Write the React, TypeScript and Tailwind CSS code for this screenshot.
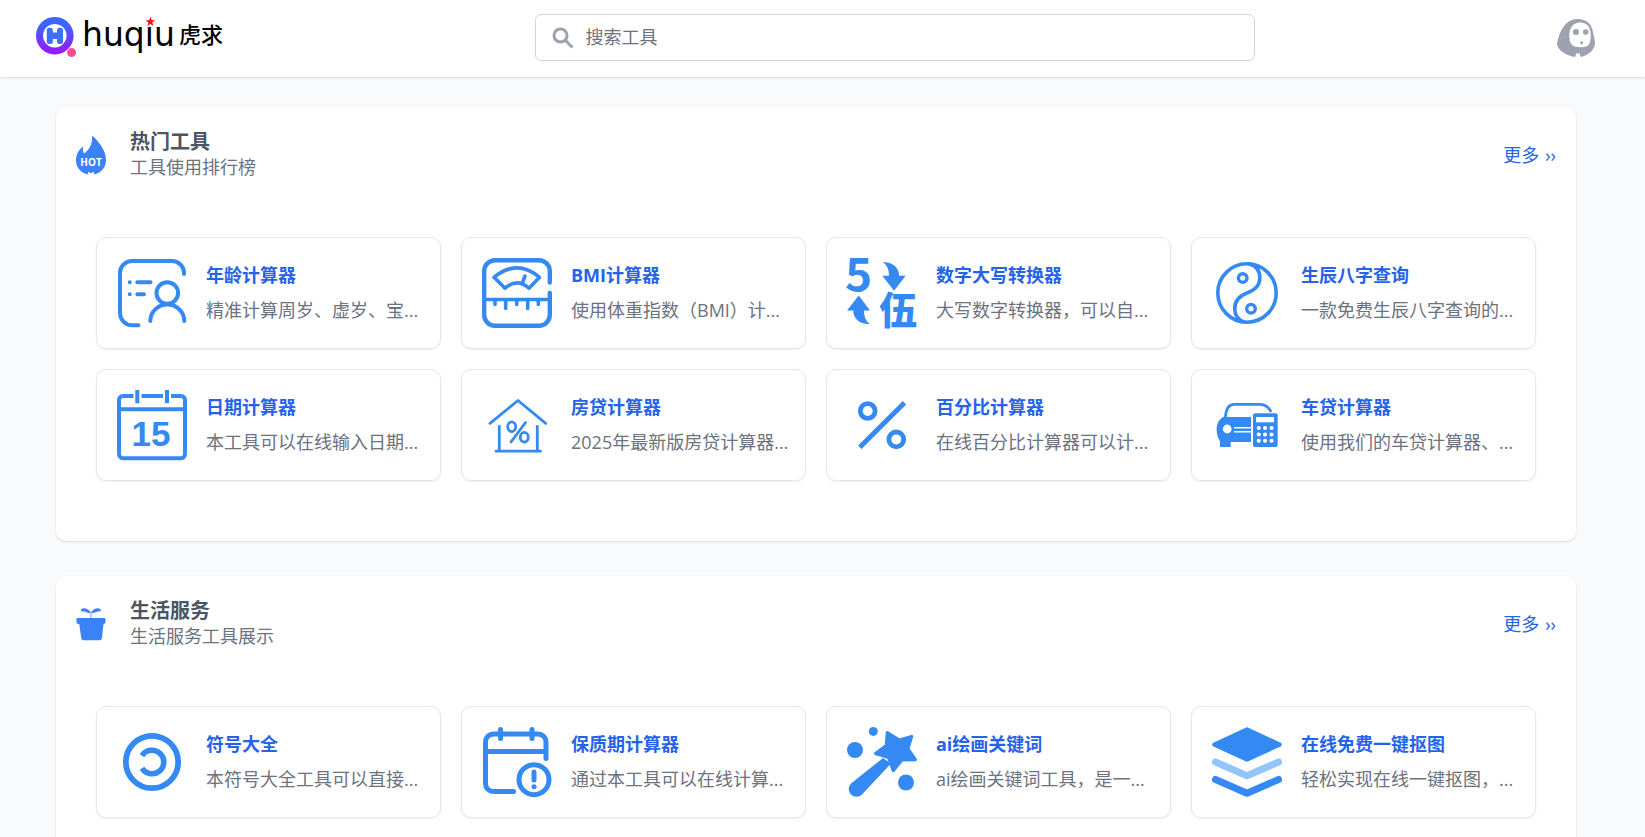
import { useState, type ReactNode } from "react";

type Tool = { name: string; desc: string; icon: ReactNode };

const BLUE = "#3589f2";

const Icon = ({ children }: { children: ReactNode }) => (
  <svg
    viewBox="0 0 70 70"
    className="h-[70px] w-[70px] shrink-0 overflow-visible"
    fill="none"
    stroke={BLUE}
    strokeWidth="4"
    strokeLinecap="round"
    strokeLinejoin="round"
    aria-hidden="true"
  >
    {children}
  </svg>
);

const AgeIcon = () => (
  <Icon>
    <path d="M67 16V15A12 12 0 0 0 55 3H15A12 12 0 0 0 3 15V55A12.300 12.300 0 0 0 15 67.300H21.500" />
    <path d="M12.700 24.300h.1M20.300 24.300H33.500M12.700 36.300h.1M20.300 36.300H27" />
    <circle cx="50.300" cy="35" r="10.800" />
    <path d="M33.300 63A17 16.500 0 0 1 67.300 63" />
  </Icon>
);

const BmiIcon = () => (
  <Icon>
    <path d="M67.800 24.500V13A10.800 10.800 0 0 0 57 2.200H13A10.800 10.800 0 0 0 2.200 13V57A10.800 10.800 0 0 0 13 67.800H57A10.800 10.800 0 0 0 67.800 57V35" strokeWidth="4.400" />
    <path d="M3 41.500H67" strokeWidth="3.400" strokeLinecap="butt" />
    <path d="M13 42V46.500M23.700 42V50.500M34.700 42V46.500M45.700 42V50.500M56.300 42V46.500" strokeWidth="3.600" />
    <path d="M12 19.300Q35 .5 57.500 19.300L47 30.200Q35 19.500 23 30.200Z" strokeWidth="3.600" />
    <path d="M43 18L40.500 24.500" strokeWidth="3.600" />
  </Icon>
);

const DigitIcon = () => (
  <Icon>
    <g fill={BLUE} stroke="none">
      <text x="-2" y="33" fontSize="46" fontWeight="700" fontFamily="'Noto Sans CJK SC', sans-serif">5</text>
      <text x="32" y="66" fontSize="38" fontWeight="900" fontFamily="'Noto Sans CJK SC', sans-serif">伍</text>
      <path d="M35.700 4.200C45 3.500 52 9 52.200 17.700H58.700L47 32.700 35.300 17.700H42C42 11 40 7 35.700 4.200Z" />
      <path d="M23 66C13 66.500 6.300 61 6.300 52.500H0L11.700 37.500 23 52.500H17C17 59 19 63.500 23 66Z" />
    </g>
  </Icon>
);

const TaijiIcon = () => (
  <Icon>
    <circle cx="35" cy="35" r="29.200" strokeWidth="3.600" />
    <path d="M37 5.800C45 8 48 14 47.800 20.500C47.500 28.500 42 32.500 35 35C27 38 22.500 43 22.700 51C22.800 58 27 62.500 33 64.200" strokeWidth="3.600" />
    <circle cx="30.700" cy="20" r="4.300" strokeWidth="3.400" />
    <circle cx="39" cy="50.700" r="4.300" strokeWidth="3.400" />
  </Icon>
);

const DateIcon = () => (
  <Icon>
    <g strokeLinecap="butt">
      <path d="M16.500 6H6A4 4 0 0 0 2 10V64A4 4 0 0 0 6 68.200H64A4 4 0 0 0 68 64V10A4 4 0 0 0 64 6H54M24.500 6H46" />
      <path d="M20.300 0V13.300M50 0V13.300M2 19.200H68" />
    </g>
    <text x="34" y="56" fontSize="35" fontWeight="700" textAnchor="middle" fill={BLUE} stroke="none" fontFamily="'Liberation Sans', sans-serif">15</text>
  </Icon>
);

const HouseIcon = () => (
  <Icon>
    <path d="M8 33.300L36 10.500L63.700 33.300M17.300 36.500V61M55.300 36.500V61M14 61.200H58.500" strokeWidth="2.800" />
    <g strokeWidth="2.800">
      <ellipse cx="29.700" cy="36.700" rx="4" ry="4.800" />
      <ellipse cx="42.300" cy="47.200" rx="4" ry="4.800" />
      <path d="M43.500 32.500L29 52" />
    </g>
  </Icon>
);

const PercentIcon = () => (
  <Icon>
    <g strokeWidth="4.800" strokeLinecap="butt">
      <circle cx="20.700" cy="21" r="7.400" />
      <circle cx="49.300" cy="49.400" r="7.400" />
      <path d="M57.500 12.800L12.800 57.300" />
    </g>
  </Icon>
);

const CarIcon = () => (
  <Icon>
    <path d="M13.300 28C13.800 20 16.500 14.300 22 14.300H48C54 14.300 57 17.500 59 22" strokeWidth="2.800" strokeLinecap="butt" />
    <path d="M11 27H39V52H18.700V57H8V51.500C3.500 44 3.500 34 8 29.500Z" fill={BLUE} stroke="none" />
    <circle cx="15.200" cy="39" r="4.400" fill="#fff" stroke="none" />
    <path d="M22 37.700H39M22 41.800H39" stroke="#fff" strokeWidth="1.500" strokeLinecap="butt" />
    <rect x="41" y="23.300" width="24.700" height="33.700" rx="2" fill={BLUE} stroke="none" />
    <path d="M44 27H62V32.300H44Z" fill="#fff" stroke="none" />
    <path d="M46.700 38h.1M53 38h.1M59.500 38h.1M46.700 44.400h.1M53 44.400h.1M59.500 44.400h.1M46.700 50.800h.1M53 50.800h.1M59.500 50.800h.1" stroke="#fff" />
  </Icon>
);

const SymbolIcon = () => (
  <Icon>
    <circle cx="35" cy="35" r="26.200" strokeWidth="5.800" />
    <path d="M25 28.700A11.800 11.800 0 1 1 25 41.300" strokeWidth="5.600" strokeLinecap="butt" />
  </Icon>
);

const ExpireIcon = () => (
  <Icon>
    <g strokeWidth="5">
      <path d="M64 31.500V15A8 8 0 0 0 56 7H11.500A8 8 0 0 0 3.500 15V56.500A8 8 0 0 0 11.500 64.500H31.500" />
      <path d="M18.500 2.500V11.500M50 2.500V11.500" />
      <path d="M3.500 24.500H64" strokeLinecap="butt" />
      <circle cx="52" cy="52.700" r="15" />
      <path d="M52 45V53M52 59.800h.1" />
    </g>
  </Icon>
);

const WandIcon = () => (
  <Icon>
    <g fill={BLUE} stroke="none">
      <circle cx="8" cy="23" r="8" />
      <circle cx="26.300" cy="4.400" r="4.500" />
      <circle cx="59" cy="55.500" r="8" />
      <path d="M36 31L4 56.500A7.500 7.500 0 1 0 15 67.500L44 36.500Z" />
    </g>
    <path d="M40.200 5.500L52.500 13L64.700 9.500L61 21.800L68.500 32.700L55 33L46.200 43.700L41.500 30.500L28.500 26.500L39.300 18.500Z" fill={BLUE} strokeWidth="3" />
  </Icon>
);

const LayersIcon = () => (
  <Icon>
    <path d="M35 2.200L67.800 17.600L35 32.800L2.200 17.600Z" fill={BLUE} />
    <path d="M3.500 35L35 48.700L66.500 35" stroke="#93c5fd" strokeWidth="7" />
    <path d="M3.500 52.500L35 66.300L66.500 52.500" strokeWidth="7" />
  </Icon>
);

const HotIcon = () => (
  <svg viewBox="0 0 30 40" className="h-10 w-[30px] overflow-visible" fill="#3b82f6" aria-hidden="true">
    <path d="M16 .6C23 6.500 30 16 30 25C30 32 25.500 37.500 18.500 39.500L17.500 36.700 15 38.200 12.500 36.700 11.500 39.500C4.500 37.500 0 32 0 25.500C0 19 3 14.500 7.200 11.500C6.600 14.500 7 17 8.300 18.500C13 15 17 9 16 .6Z" />
    <text x="15" y="31" fontSize="10" fontWeight="700" textAnchor="middle" fill="#fff" fontFamily="'Open Sans', sans-serif">HOT</text>
  </svg>
);

const PotIcon = () => (
  <svg viewBox="0 0 30 40" className="h-10 w-[30px]" fill="#3b82f6" aria-hidden="true">
    <path d="M1.500 14H28.500Q29.500 14 29.500 15V18Q29.500 20 27.500 20L26 34Q25.700 36.300 23.500 36.300H7.500Q5.500 36.300 5.200 34L3.300 20Q.5 20 .5 18V15Q.5 14 1.500 14Z" />
    <path d="M15 8.300C12.500 10 10 7.800 8 7.500Q4.600 7.800 4.600 6C6.500 3.500 11 3.500 15 8.300ZM15 8.300C17.500 10 20 7.800 22 7.500Q25.300 7.800 25 6C23 3.500 18.500 3.500 15 8.300Z" />
    <path d="M14.600 8H15.400V14H14.600Z" />
  </svg>
);

const Logo = () => (
  <svg viewBox="0 0 196 47" className="h-[47px] w-[196px] overflow-visible" role="img" aria-label="huqiu虎求">
    <defs>
      <linearGradient id="ring" x1="0" y1="0" x2="0" y2="1">
        <stop offset="0.2" stopColor="#3a66ff" />
        <stop offset="1" stopColor="#a012ff" />
      </linearGradient>
    </defs>
    <path fillRule="evenodd" fill="url(#ring)" d="M18.800 2.900a18.800 18.800 0 1 0 .01 0ZM18.800 9.900a11.800 11.800 0 1 1-.01 0Z" />
    <g fill="#3a6fff">
      <rect x="10.800" y="13.700" width="6" height="16.300" rx="2.500" />
      <rect x="21" y="13.700" width="6" height="16.300" rx="2.500" />
      <rect x="14" y="18.500" width="10" height="6.500" />
    </g>
    <circle cx="35.600" cy="38.600" r="4.500" fill="#ff4a95" />
    <text x="46" y="32" fontSize="33" fontFamily="'DejaVu Sans', sans-serif" fill="#000">huqiu</text>
    <circle cx="113.500" cy="8" r="5" fill="#fff" />
    <path fill="#f5120c" d="M114.400 2.800L115.600 6.200L119.200 6.300L116.300 8.500L117.400 12L114.400 9.900L111.400 12L112.500 8.500L109.600 6.300L113.200 6.200Z" />
    <text x="143" y="29" fontSize="22" fontWeight="500" fontFamily="'Noto Sans CJK SC', sans-serif" fill="#000">虎求</text>
  </svg>
);

const Avatar = () => (
  <svg viewBox="0 0 38 38" className="h-[38px] w-[38px]" aria-hidden="true">
    <path
      fill="#9ca3af"
      d="M20.500 0C30 0 34.500 5 36 13C37 18 38 21 38 24C38 31 31 36 24.500 38Q22.800 37.800 22.800 34.500H19Q18.800 37.800 17.500 38C10 36.500 0 31.500 0 24.500C2 15 7 0 20.500 0Z"
    />
    <path fill="#fff" d="M23.500 3.500C30 3.500 33.700 9 33.700 15.500C33.700 24 33 28.200 23.500 28.200C14 28.200 12.300 24 12.300 16C12.300 9 16 3.500 23.500 3.500Z" />
    <g fill="#9ca3af">
      <circle cx="19" cy="13" r="3" />
      <circle cx="28.700" cy="13" r="2.800" />
      <circle cx="24.600" cy="23.700" r="1.500" />
    </g>
  </svg>
);

const hotTools: Tool[] = [
  { name: "年龄计算器", desc: "精准计算周岁、虚岁、宝...", icon: <AgeIcon /> },
  { name: "BMI计算器", desc: "使用体重指数（BMI）计...", icon: <BmiIcon /> },
  { name: "数字大写转换器", desc: "大写数字转换器，可以自...", icon: <DigitIcon /> },
  { name: "生辰八字查询", desc: "一款免费生辰八字查询的...", icon: <TaijiIcon /> },
  { name: "日期计算器", desc: "本工具可以在线输入日期...", icon: <DateIcon /> },
  { name: "房贷计算器", desc: "2025年最新版房贷计算器...", icon: <HouseIcon /> },
  { name: "百分比计算器", desc: "在线百分比计算器可以计...", icon: <PercentIcon /> },
  { name: "车贷计算器", desc: "使用我们的车贷计算器、...", icon: <CarIcon /> },
];

const lifeTools: Tool[] = [
  { name: "符号大全", desc: "本符号大全工具可以直接...", icon: <SymbolIcon /> },
  { name: "保质期计算器", desc: "通过本工具可以在线计算...", icon: <ExpireIcon /> },
  { name: "ai绘画关键词", desc: "ai绘画关键词工具，是一...", icon: <WandIcon /> },
  { name: "在线免费一键抠图", desc: "轻松实现在线一键抠图，...", icon: <LayersIcon /> },
];

const ToolCard = ({ tool }: { tool: Tool }) => (
  <a
    href="#"
    className="flex items-center gap-[19px] rounded-[10px] border border-gray-200 bg-white py-5 pr-1 pl-5 shadow-sm shadow-black/5"
  >
    {tool.icon}
    <div className="min-w-0">
      <h3 className="truncate text-[18px] leading-[35px] font-bold text-[#2563eb]">{tool.name}</h3>
      <p className="truncate text-[18px] leading-[35px] text-[#6b7280]">{tool.desc}</p>
    </div>
  </a>
);

const Section = ({ title, subtitle, icon, tools }: { title: string; subtitle: string; icon: ReactNode; tools: Tool[] }) => (
  <section className="rounded-[10px] bg-white pb-[60px] shadow-sm">
    <div className="flex items-center justify-between px-5 pt-5">
      <div className="flex items-center gap-6">
        {icon}
        <div className="pt-0.5 pb-1">
          <h2 className="text-[20px] leading-[26px] font-bold text-[#4b5563]">{title}</h2>
          <p className="text-[18px] leading-6 text-[#6b7280]">{subtitle}</p>
        </div>
      </div>
      <a href="#" className="flex gap-1.5 text-[18px] leading-7 text-[#2563eb]">
        <span>更多</span>
        <span>››</span>
      </a>
    </div>
    <div className="mt-[54px] grid grid-cols-1 gap-5 px-10 sm:grid-cols-2 xl:grid-cols-4">
      {tools.map((tool) => (
        <ToolCard key={tool.name} tool={tool} />
      ))}
    </div>
  </section>
);

const App = () => {
  const [keyword, setKeyword] = useState("");

  return (
    <div className="min-h-screen overflow-hidden bg-[#f9fafb] font-['Open_Sans','Noto_Sans_CJK_SC',sans-serif]">
      <header className="flex items-center justify-between gap-6 bg-white pt-[14px] pr-[50px] pb-4 pl-9 shadow">
        <a href="#" className="shrink-0">
          <Logo />
        </a>
        <label htmlFor="keyword" className="flex h-[47px] w-full max-w-[720px] items-center gap-3 rounded-md border border-gray-300 bg-white px-4">
          <svg viewBox="0 0 22 22" className="h-[22px] w-[22px] shrink-0" fill="none" stroke="#9ca3af" strokeWidth="3" aria-hidden="true">
            <circle cx="8.500" cy="8.500" r="6.500" />
            <path d="M13 13L20.500 20.500" />
          </svg>
          <input
            id="keyword"
            type="text"
            aria-label="搜索工具"
            value={keyword}
            onChange={(e) => setKeyword(e.target.value)}
            placeholder="搜索工具"
            className="w-full pb-0.5 text-[18px] leading-7 text-[#4b5563] outline-none placeholder:text-[#6b7280]"
          />
        </label>
        <button type="button" aria-label="用户中心" className="shrink-0">
          <Avatar />
        </button>
      </header>
      <main className="flex flex-col gap-[35px] pt-[30px] pr-[69px] pb-10 pl-14">
        <Section title="热门工具" subtitle="工具使用排行榜" icon={<HotIcon />} tools={hotTools} />
        <Section title="生活服务" subtitle="生活服务工具展示" icon={<PotIcon />} tools={lifeTools} />
      </main>
    </div>
  );
};

export default App;
